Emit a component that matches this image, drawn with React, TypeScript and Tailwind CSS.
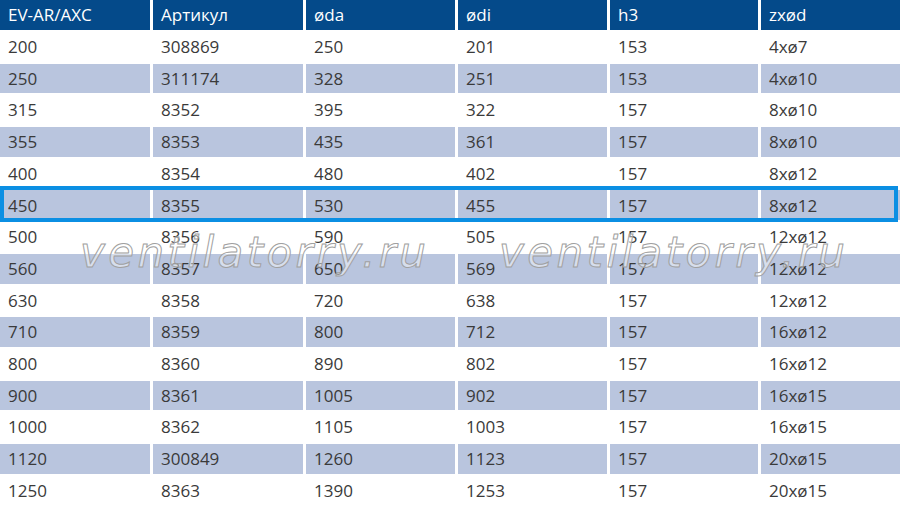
const headers = ["EV-AR/AXC", "Артикул", "øda", "ødi", "h3", "zxød"];

const rows = [
  ["200", "308869", "250", "201", "153", "4xø7"],
  ["250", "311174", "328", "251", "153", "4xø10"],
  ["315", "8352", "395", "322", "157", "8xø10"],
  ["355", "8353", "435", "361", "157", "8xø10"],
  ["400", "8354", "480", "402", "157", "8xø12"],
  ["450", "8355", "530", "455", "157", "8xø12"],
  ["500", "8356", "590", "505", "157", "12xø12"],
  ["560", "8357", "650", "569", "157", "12xø12"],
  ["630", "8358", "720", "638", "157", "12xø12"],
  ["710", "8359", "800", "712", "157", "16xø12"],
  ["800", "8360", "890", "802", "157", "16xø12"],
  ["900", "8361", "1005", "902", "157", "16xø15"],
  ["1000", "8362", "1105", "1003", "157", "16xø15"],
  ["1120", "300849", "1260", "1123", "157", "20xø15"],
  ["1250", "8363", "1390", "1253", "157", "20xø15"],
];

const cols = "grid grid-cols-[150px_150px_149px_149px_148px_1fr] gap-x-[3px]";

export default function App() {
  return (
    <div className="relative w-[900px] h-[511px] overflow-hidden bg-white font-['Open_Sans',sans-serif] text-[17px]">
      <div className="flex flex-col gap-y-[2px]">
        <div className={cols}>
          {headers.map((h) => (
            <div key={h} className="h-[30px] bg-[#044a8a] pl-2 flex items-center text-white font-medium">
              {h}
            </div>
          ))}
        </div>
        {rows.map((r, i) => (
          <div key={r[0]} className={cols}>
            {r.map((c, j) => (
              <div
                key={j}
                className={`h-[29.7px] pl-2 flex items-center text-[#3a3a3a] ${i % 2 === 1 ? "bg-[#b9c5de]" : "bg-white"}`}
              >
                {c}
              </div>
            ))}
          </div>
        ))}
      </div>

      {/* highlighted row frame */}
      <div className="absolute left-0 top-[186px] w-[898px] h-[36px] border-4 border-[#0b8fe3] pointer-events-none" />

      {/* watermarks */}
      <span className="absolute left-[80px] top-[232px] leading-none italic text-[42px] tracking-[3.4px] font-['DejaVu_Sans',sans-serif] text-[rgba(255,255,255,0.45)] [-webkit-text-stroke:1px_#a0a0a0] pointer-events-none whitespace-nowrap">
        ventilatorry.ru
      </span>
      <span className="absolute left-[499px] top-[232px] leading-none italic text-[42px] tracking-[3.4px] font-['DejaVu_Sans',sans-serif] text-[rgba(255,255,255,0.45)] [-webkit-text-stroke:1px_#a0a0a0] pointer-events-none whitespace-nowrap">
        ventilatorry.ru
      </span>
    </div>
  );
}
